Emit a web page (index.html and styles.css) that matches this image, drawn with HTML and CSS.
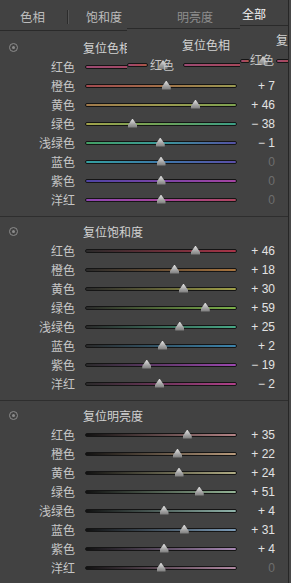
FILE: index.html
```html
<!DOCTYPE html>
<html>
<head>
    <title>HSL</title>
    <link rel="stylesheet" href="styles.css">
</head>
<body>
<div class="panel">
    <!-- Tabs -->
    <div class="tabs">
        <span class="tab tab-first">色相</span>
        <span class="tab-sep"></span>
        <span class="tab tab-sat">饱和度</span>
        <span class="tab tab-dim">明亮度</span>
        <span class="tab tab-on">全部</span>
    </div>

    <!-- Hue -->
    <div class="section sec-first">
        <div class="sec-head"><span class="reset-icon"></span><span class="sec-title">复位色相</span></div>
        <div class="row"><span class="lbl">红色</span><div class="track h-red"><span class="thumb" style="left:51%"></span></div><span class="val"></span></div>
        <div class="row"><span class="lbl">橙色</span><div class="track h-orange"><span class="thumb" style="left:53.5%"></span></div><span class="val">+ 7</span></div>
        <div class="row"><span class="lbl">黄色</span><div class="track h-yellow"><span class="thumb" style="left:73%"></span></div><span class="val">+ 46</span></div>
        <div class="row"><span class="lbl">绿色</span><div class="track h-green"><span class="thumb" style="left:31%"></span></div><span class="val">− 38</span></div>
        <div class="row"><span class="lbl">浅绿色</span><div class="track h-aqua"><span class="thumb" style="left:49.5%"></span></div><span class="val">− 1</span></div>
        <div class="row"><span class="lbl">蓝色</span><div class="track h-blue"><span class="thumb" style="left:50%"></span></div><span class="val zero">0</span></div>
        <div class="row"><span class="lbl">紫色</span><div class="track h-purple"><span class="thumb" style="left:50%"></span></div><span class="val zero">0</span></div>
        <div class="row"><span class="lbl">洋红</span><div class="track h-magenta"><span class="thumb" style="left:50%"></span></div><span class="val zero">0</span></div>
    </div>

    <!-- Saturation -->
    <div class="section">
        <div class="sec-head"><span class="reset-icon"></span><span class="sec-title">复位饱和度</span></div>
        <div class="row"><span class="lbl">红色</span><div class="track s-red"><span class="thumb" style="left:73%"></span></div><span class="val">+ 46</span></div>
        <div class="row"><span class="lbl">橙色</span><div class="track s-orange"><span class="thumb" style="left:59%"></span></div><span class="val">+ 18</span></div>
        <div class="row"><span class="lbl">黄色</span><div class="track s-yellow"><span class="thumb" style="left:65%"></span></div><span class="val">+ 30</span></div>
        <div class="row"><span class="lbl">绿色</span><div class="track s-green"><span class="thumb" style="left:79.5%"></span></div><span class="val">+ 59</span></div>
        <div class="row"><span class="lbl">浅绿色</span><div class="track s-aqua"><span class="thumb" style="left:62.5%"></span></div><span class="val">+ 25</span></div>
        <div class="row"><span class="lbl">蓝色</span><div class="track s-blue"><span class="thumb" style="left:51%"></span></div><span class="val">+ 2</span></div>
        <div class="row"><span class="lbl">紫色</span><div class="track s-purple"><span class="thumb" style="left:40.5%"></span></div><span class="val">− 19</span></div>
        <div class="row"><span class="lbl">洋红</span><div class="track s-magenta"><span class="thumb" style="left:49%"></span></div><span class="val">− 2</span></div>
    </div>

    <!-- Luminance -->
    <div class="section">
        <div class="sec-head"><span class="reset-icon"></span><span class="sec-title">复位明亮度</span></div>
        <div class="row"><span class="lbl">红色</span><div class="track l-red"><span class="thumb" style="left:67.5%"></span></div><span class="val">+ 35</span></div>
        <div class="row"><span class="lbl">橙色</span><div class="track l-orange"><span class="thumb" style="left:61%"></span></div><span class="val">+ 22</span></div>
        <div class="row"><span class="lbl">黄色</span><div class="track l-yellow"><span class="thumb" style="left:62%"></span></div><span class="val">+ 24</span></div>
        <div class="row"><span class="lbl">绿色</span><div class="track l-green"><span class="thumb" style="left:75.5%"></span></div><span class="val">+ 51</span></div>
        <div class="row"><span class="lbl">浅绿色</span><div class="track l-aqua"><span class="thumb" style="left:52%"></span></div><span class="val">+ 4</span></div>
        <div class="row"><span class="lbl">蓝色</span><div class="track l-blue"><span class="thumb" style="left:65.5%"></span></div><span class="val">+ 31</span></div>
        <div class="row"><span class="lbl">紫色</span><div class="track l-purple"><span class="thumb" style="left:52%"></span></div><span class="val">+ 4</span></div>
        <div class="row"><span class="lbl">洋红</span><div class="track l-magenta"><span class="thumb" style="left:50%"></span></div><span class="val zero">0</span></div>
    </div>

    <!-- screen-capture ghost copies over the first row -->
    <div class="ghost ghost-a">
        <div class="track h-red g-seg1"></div>
        <span class="thumb g-thumb"></span>
        <span class="g-lbl">红色</span>
        <div class="track h-red g-seg2"></div>
        <span class="g-title">复位色相</span>
    </div>
    <div class="ghost ghost-b">
        <div class="track h-red g-seg1"></div>
        <span class="thumb g-thumb"></span>
        <span class="g-lbl">红色</span>
        <div class="track h-red g-seg2"></div>
        <span class="g-title">复</span>
    </div>
</div>
</body>
</html>
```

FILE: styles.css
```css
body {
    margin: 0;
    background: #474747;
    font-family: "Noto Sans CJK SC", "Noto Sans", sans-serif;
    font-size: 12px;
    color: #c6c6c6;
}

.panel {
    position: relative;
    width: 288px;
    height: 583px;
    background: #424242;
    border-right: 1px solid #262626;
    overflow: hidden;
}

/* tabs */
.tabs {
    display: flex;
    align-items: center;
    height: 31px;
    padding-top: 3px;
    box-sizing: border-box;
    border-bottom: 1px solid #2a2a2a;
    line-height: 19px;
}

.tab {
    color: #bdbdbd;
}

.tab-first {
    margin-left: 20px;
    font-size: 12.5px;
}

.tab-sep {
    width: 1px;
    height: 14px;
    margin-left: 22px;
    background: #2c2c2c;
    box-shadow: 1px 0 0 #555;
}

.tab-sat {
    margin-left: 18px;
}

.tab-dim {
    margin-left: 55px;
    color: #8e8e8e;
}

.tab-on {
    margin-left: 29px;
    margin-bottom: 6px;
    color: #f2f2f2;
}

/* sections */
.section {
    padding: 5px 0 7px;
    border-top: 1px solid #2e2e2e;
}

.sec-first {
    padding-top: 7px;
    border-top: none;
}

.sec-head {
    display: flex;
    align-items: center;
    height: 19px;
}

.reset-icon {
    position: relative;
    width: 7px;
    height: 7px;
    margin-left: 9px;
    border: 1px solid #8c8c8c;
    border-radius: 50%;
}

.reset-icon::after {
    content: "";
    position: absolute;
    left: 2px;
    top: 2px;
    width: 3px;
    height: 3px;
    border-radius: 50%;
    background: #8c8c8c;
}

.sec-title {
    margin-left: 65px;
    color: #d2d2d2;
}

.row {
    display: flex;
    align-items: center;
    height: 19px;
}

.lbl {
    width: 75px;
    text-align: right;
}

.val {
    width: 38px;
    text-align: right;
    font-family: "Liberation Sans", sans-serif;
    color: #e2e2e2;
}

.val.zero {
    color: #6e6e6e;
}

/* slider */
.track {
    position: relative;
    width: 150px;
    height: 2px;
    margin-left: 10px;
    border: 1px solid #151515;
    border-radius: 2px;
}

.thumb {
    position: absolute;
    top: -4px;
    width: 9px;
    height: 9px;
    margin-left: -4.5px;
    background: linear-gradient(#e4e4e4, #a0a0a0 60%, #7a7a7a);
    clip-path: polygon(50% 0, 85% 50%, 100% 72%, 100% 100%, 0 100%, 0 72%, 15% 50%);
}

/* hue tracks */
.h-red { background: linear-gradient(90deg, #9c4a72, #a8485a 50%, #a85a44); }
.h-orange { background: linear-gradient(90deg, #a44a50, #a27048 50%, #9a9a52); }
.h-yellow { background: linear-gradient(90deg, #a27a4c, #9c9a50 50%, #7ea250); }
.h-green { background: linear-gradient(90deg, #a2a24a, #6ea258 50%, #3c9e86); }
.h-aqua { background: linear-gradient(90deg, #44a064, #3a9a9a 50%, #5450a4); }
.h-blue { background: linear-gradient(90deg, #34a0a0, #3c78a8 50%, #5a4ea8); }
.h-purple { background: linear-gradient(90deg, #4e44a4, #7a44a6 50%, #a444a2); }
.h-magenta { background: linear-gradient(90deg, #8e46b2, #a4449a 50%, #b04660); }

/* saturation tracks */
.s-red { background: linear-gradient(90deg, #2a2a2a, #a83448); }
.s-orange { background: linear-gradient(90deg, #2a2a2a, #a8743e); }
.s-yellow { background: linear-gradient(90deg, #2a2a2a, #a0a048); }
.s-green { background: linear-gradient(90deg, #2a2a2a, #7cb04a); }
.s-aqua { background: linear-gradient(90deg, #2a2a2a, #48a886); }
.s-blue { background: linear-gradient(90deg, #2a2a2a, #3c84ac); }
.s-purple { background: linear-gradient(90deg, #2a2a2a, #9c48b0); }
.s-magenta { background: linear-gradient(90deg, #2a2a2a, #b0408a); }

/* luminance tracks */
.l-red { background: linear-gradient(90deg, #111, #b48486); }
.l-orange { background: linear-gradient(90deg, #111, #b89a7c); }
.l-yellow { background: linear-gradient(90deg, #111, #b0ac84); }
.l-green { background: linear-gradient(90deg, #111, #94b496); }
.l-aqua { background: linear-gradient(90deg, #111, #90b4aa); }
.l-blue { background: linear-gradient(90deg, #111, #7c9cb8); }
.l-purple { background: linear-gradient(90deg, #111, #a888b4); }
.l-magenta { background: linear-gradient(90deg, #111, #b088a2); }

/* ghost copies */
.ghost {
    position: absolute;
    background: #424242;
    border-top: 1px solid #2a2a2a;
    overflow: hidden;
}

.ghost .track {
    position: absolute;
    margin-left: 0;
}

.ghost-a {
    left: 127px;
    top: 28px;
    width: 161px;
    height: 46px;
}

.ghost-b {
    left: 240px;
    top: 25px;
    width: 48px;
    height: 46px;
}

.g-lbl,
.g-title {
    position: absolute;
    line-height: 19px;
    white-space: nowrap;
}

.g-title {
    color: #d2d2d2;
}

.ghost-a .g-seg1 { left: 0; top: 34px; width: 19px; }
.ghost-a .g-thumb { left: 36px; top: 31px; }
.ghost-a .g-lbl { left: 23px; top: 26px; }
.ghost-a .g-seg2 { left: 56px; top: 34px; width: 120px; }
.ghost-a .g-title { left: 55px; top: 6px; }

.ghost-b .g-seg1 { left: 0; top: 33px; width: 8px; }
.ghost-b .g-thumb { left: 23px; top: 30px; }
.ghost-b .g-lbl { left: 10px; top: 24px; }
.ghost-b .g-seg2 { left: 36px; top: 33px; width: 20px; }
.ghost-b .g-title { left: 36px; top: 4px; }
```
